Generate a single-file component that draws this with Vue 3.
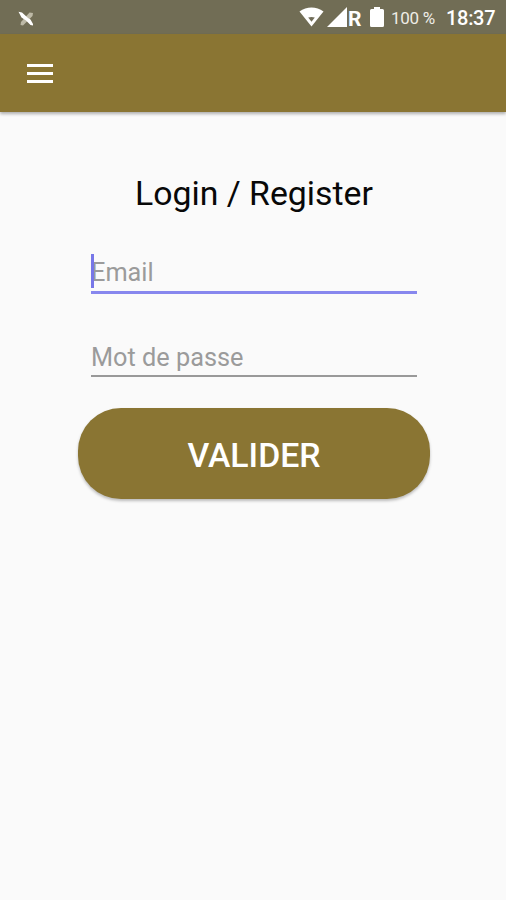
<template>
  <div class="screen">
    <div class="status-bar">
      <svg class="notif-icon" viewBox="0 0 18 16" width="18" height="16">
        <path d="M11.500 1.500l3.500.5-.5 3-9.500 9.500-2.500-.5.500-3z" fill="#bdb9a6" />
        <path d="M.5.800L4 1.500l6 5.500 2.500 1.500L15 13v1.500l-2.500-.5-4.500-4.500-4.500-3z" fill="#fff" />
      </svg>
      <div class="status-right">
        <svg class="wifi-icon" viewBox="0 0 26 20" width="26" height="20">
          <path d="M.5 4.500C7.500-1 17.500-1 24.500 4.500L12.500 19.500z" fill="#fff" />
          <path d="M9.200 10.500q3.300-.8 6.600 0L12.500 14.800z" fill="#716d59" />
        </svg>
        <svg class="signal-icon" viewBox="0 0 20 20" width="20" height="20">
          <path d="M0 20L20 0v20z" fill="#fff" />
        </svg>
        <span class="roaming">R</span>
        <svg class="battery-icon" viewBox="0 0 14 20" width="14" height="20">
          <path d="M4 0h6v2h2.500q1.500 0 1.500 1.500v15q0 1.500-1.500 1.500h-11Q0 20 0 18.500v-15Q0 2 1.500 2H4z" fill="#fff" />
        </svg>
        <span class="percent">100 %</span>
        <span class="clock">18:37</span>
      </div>
    </div>

    <header class="app-bar">
      <button class="menu-button" type="button" aria-label="Menu">
        <span></span>
        <span></span>
        <span></span>
      </button>
    </header>

    <main class="content">
      <h1 class="title">Login / Register</h1>

      <form class="login-form" @submit.prevent>
        <div class="field field-active">
          <span v-if="!email" class="caret"></span>
          <input v-model="email" type="text" placeholder="Email" />
        </div>
        <div class="field">
          <input v-model="password" type="password" placeholder="Mot de passe" />
        </div>
        <button class="submit-button" type="submit">VALIDER</button>
      </form>
    </main>
  </div>
</template>

<script setup>
import { ref } from 'vue'

const email = ref('')
const password = ref('')
</script>

<style>
body {
  margin: 0;
  background: #fafafa;
}
</style>

<style scoped>
.screen {
  display: flex;
  flex-direction: column;
  height: 100vh;
  min-height: 900px;
  background: #fafafa;
  font-family: Roboto, 'Liberation Sans', sans-serif;
  overflow: hidden;
}

.status-bar {
  display: flex;
  align-items: center;
  justify-content: space-between;
  height: 34px;
  padding: 0 12px 0 18px;
  box-sizing: border-box;
  background: #716d55;
  color: #fff;
}

.notif-icon {
  margin-top: 3px;
}

.status-right {
  display: flex;
  align-items: center;
}

.wifi-icon {
  margin-right: 2px;
}

.signal-icon {
  margin-right: 1px;
}

.roaming {
  width: 13px;
  margin-right: 9px;
  padding-top: 3px;
  font-size: 21px;
  font-weight: 700;
  line-height: 32px;
}

.battery-icon {
  margin-right: 7px;
}

.percent {
  width: 44px;
  margin-right: 11px;
  padding-top: 2px;
  font-size: 17px;
  line-height: 32px;
  letter-spacing: -0.3px;
  color: #eeece5;
  white-space: nowrap;
}

.clock {
  width: 48px;
  padding-top: 2px;
  font-size: 20px;
  font-weight: 500;
  line-height: 32px;
  letter-spacing: -0.3px;
}

.app-bar {
  display: flex;
  align-items: center;
  height: 78px;
  padding-left: 27px;
  background: #8a7533;
  box-shadow: 0 2px 3px rgba(0, 0, 0, 0.3);
}

.menu-button {
  display: flex;
  flex-direction: column;
  gap: 5px;
  width: 26px;
  padding: 0;
  border: none;
  background: none;
}

.menu-button span {
  height: 3px;
  background: #fff;
}

.content {
  padding: 61px 76px 0 78px;
}

.title {
  margin: 0;
  font-size: 33.800px;
  font-weight: 400;
  line-height: 42px;
  text-align: center;
  color: #080808;
}

.login-form {
  display: flex;
  flex-direction: column;
  padding-top: 35px;
}

.field {
  position: relative;
  height: 44px;
  margin: 0 13px;
  box-sizing: border-box;
  border-bottom: 2px solid #999;
}

.field-active {
  margin-bottom: 39px;
  border-bottom: 3px solid #8787ee;
}

.caret {
  position: absolute;
  top: 4px;
  left: 0;
  width: 3px;
  height: 34px;
  background: #7777e8;
}

.field input {
  width: 100%;
  height: 42px;
  padding: 6px 0 0;
  box-sizing: border-box;
  border: none;
  outline: none;
  background: transparent;
  font-family: inherit;
  font-size: 25.300px;
}

.field-active input {
  padding-top: 2px;
}

.field input::placeholder {
  color: #9b9b9b;
  opacity: 1;
}

.submit-button {
  height: 91px;
  margin-top: 31px;
  padding: 4px 0 0;
  border: none;
  border-radius: 43px;
  background: #8a7533;
  box-shadow: 0 2px 3px rgba(0, 0, 0, 0.25);
  color: #fff;
  font-family: inherit;
  font-size: 33.800px;
  font-weight: 500;
}
</style>
